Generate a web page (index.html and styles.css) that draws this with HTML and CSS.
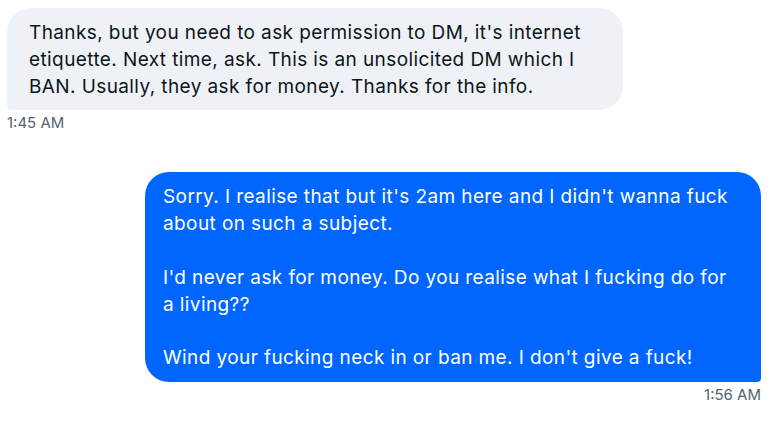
FILE: index.html
```html
<!DOCTYPE html>
<html lang="en">
<head>
<meta charset="utf-8">
<link rel="stylesheet" href="styles.css">
</head>
<body>
<div class="thread">
  <div class="msg msg-in">
    <div class="bubble bubble-in">Thanks, but you need to ask permission to DM, it's internet etiquette. Next time, ask. This is an unsolicited DM which I BAN. Usually, they ask for money. Thanks for the info.</div>
    <div class="time">1:45 AM</div>
  </div>
  <div class="msg msg-out">
    <div class="bubble bubble-out">Sorry. I realise that but it's 2am here and I didn't wanna fuck about on such a subject.<br><br>I'd never ask for money. Do you realise what I fucking do for a living??<br><br>Wind your fucking neck in or ban me. I don't give a fuck!</div>
    <div class="time">1:56 AM</div>
  </div>
</div>
</body>
</html>
```
FILE: styles.css
```css
html, body {
  margin: 0;
  padding: 0;
  background: #ffffff;
}
body {
  font-family: Inter, "Noto Sans", sans-serif;
}
.thread {
  width: 769px;
  padding: 8px 8px 0 7px;
  box-sizing: border-box;
  display: flex;
  flex-direction: column;
  gap: 41px;
}
.msg {
  display: flex;
  flex-direction: column;
}
.msg-in {
  align-items: flex-start;
}
.msg-out {
  align-items: flex-end;
}
.bubble {
  font-size: 19px;
  letter-spacing: 0.4px;
  line-height: 26.8px;
  box-sizing: border-box;
  width: 616px;
}
.bubble-in {
  padding: 12px 20px 10px 22px;
  background: #eef2f6;
  color: #0f1419;
  border-radius: 24px 24px 24px 4px;
}
.bubble-out {
  padding: 12px 20px 10px 18px;
  background: #0066ff;
  color: #ffffff;
  border-radius: 24px 24px 4px 24px;
}
.time {
  font-size: 15px;
  line-height: 16px;
  color: #536471;
  margin-top: 5px;
}
```
